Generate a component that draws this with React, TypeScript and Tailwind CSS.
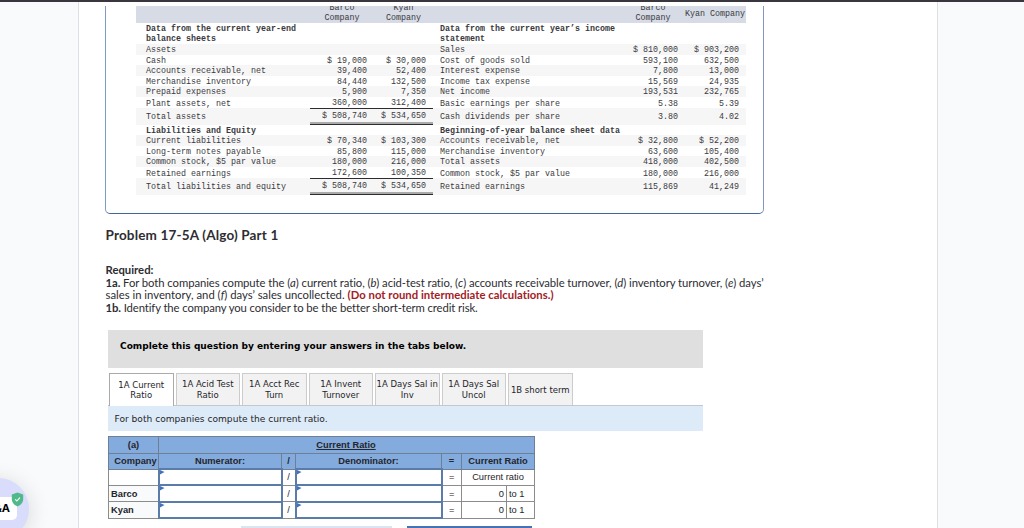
import React from 'react';

type SheetRow = {
  left: string;
  barco?: string;
  kyan?: string;
  right: string;
  barco2?: string;
  kyan2?: string;
  height: string;
  bold?: boolean;
  striped?: boolean;
  rule?: 'single' | 'double';
};

const rows: SheetRow[] = [
  { left: 'Data from the current year-end\nbalance sheets', right: 'Data from the current year’s income\nstatement', height: 'h-[21px]', bold: true },
  { left: 'Assets', right: 'Sales', barco2: '$ 810,000', kyan2: '$ 903,200', height: 'h-[11px]', striped: true },
  { left: 'Cash', barco: '$ 19,000', kyan: '$ 30,000', right: 'Cost of goods sold', barco2: '593,100', kyan2: '632,500', height: 'h-[10px]' },
  { left: 'Accounts receivable, net', barco: '39,400', kyan: '52,400', right: 'Interest expense', barco2: '7,800', kyan2: '13,000', height: 'h-[11px]', striped: true },
  { left: 'Merchandise inventory', barco: '84,440', kyan: '132,500', right: 'Income tax expense', barco2: '15,569', kyan2: '24,935', height: 'h-[10px]' },
  { left: 'Prepaid expenses', barco: '5,900', kyan: '7,350', right: 'Net income', barco2: '193,531', kyan2: '232,765', height: 'h-[11px]', striped: true },
  { left: 'Plant assets, net', barco: '360,000', kyan: '312,400', right: 'Basic earnings per share', barco2: '5.38', kyan2: '5.39', height: 'h-[11px]', rule: 'single' },
  { left: 'Total assets', barco: '$ 508,740', kyan: '$ 534,650', right: 'Cash dividends per share', barco2: '3.80', kyan2: '4.02', height: 'h-[17px]', striped: true, rule: 'double' },
  { left: 'Liabilities and Equity', right: 'Beginning-of-year balance sheet data', height: 'h-[10px]', bold: true },
  { left: 'Current liabilities', barco: '$ 70,340', kyan: '$ 103,300', right: 'Accounts receivable, net', barco2: '$ 32,800', kyan2: '$ 52,200', height: 'h-[11px]', striped: true },
  { left: 'Long-term notes payable', barco: '85,800', kyan: '115,000', right: 'Merchandise inventory', barco2: '63,600', kyan2: '105,400', height: 'h-[10px]' },
  { left: 'Common stock, $5 par value', barco: '180,000', kyan: '216,000', right: 'Total assets', barco2: '418,000', kyan2: '402,500', height: 'h-[11px]', striped: true },
  { left: 'Retained earnings', barco: '172,600', kyan: '100,350', right: 'Common stock, $5 par value', barco2: '180,000', kyan2: '216,000', height: 'h-[11px]', rule: 'single' },
  { left: 'Total liabilities and equity', barco: '$ 508,740', kyan: '$ 534,650', right: 'Retained earnings', barco2: '115,869', kyan2: '41,249', height: 'h-[17px]', striped: true, rule: 'double' }
];

const tabs = [
  '1A Current\nRatio',
  '1A Acid Test\nRatio',
  '1A Acct Rec\nTurn',
  '1A Invent\nTurnover',
  '1A Days Sal in\nInv',
  '1A Days Sal\nUncol',
  '1B short term'
];

const sheetCols = 'grid grid-cols-[174px_61px_62px_195px_56px_62px]';

const ruleClass = (rule?: 'single' | 'double') => {
  if (rule === 'single') return 'border-b border-[#2c2c30] pt-[1px]';
  if (rule === 'double') return 'border-b border-[#2c2c30] shadow-[inset_0_-2px_0_#aaaaaa]';
  return 'pt-[1px]';
};

const BalanceSheet: React.FC = () => (
  <div className="w-[610px] font-['Liberation_Mono',monospace] text-[8.33px] leading-[10px] text-[#3a3a3e] whitespace-pre">
    <div className={`${sheetCols} h-[17px] grid-rows-[17px] bg-[#d6dbe5] overflow-hidden text-center`}>
      <div />
      <div className="flex items-end justify-center pl-[3px]">{'Barco\nCompany'}</div>
      <div className="flex items-end justify-center pl-[3px]">{'Kyan\nCompany'}</div>
      <div />
      <div className="flex items-end justify-center pr-[6px]">{'Barco\nCompany'}</div>
      <div className="flex items-center justify-center pb-[2px]">Kyan Company</div>
    </div>
    {rows.map((row, i) => (
      <div
        key={i}
        className={`${sheetCols} ${row.height} ${row.striped ? 'bg-[#f6f6f6]' : ''} ${row.bold ? 'font-bold' : ''}`}
      >
        <div className="flex items-center pt-[1px] pl-[10px]">{row.left}</div>
        <div className={`flex items-center justify-end pr-[4px] ${ruleClass(row.rule)}`}>{row.barco}</div>
        <div className={`flex items-center justify-end pr-[7px] ${ruleClass(row.rule)}`}>{row.kyan}</div>
        <div className="flex items-center pt-[1px] pl-[7px]">{row.right}</div>
        <div className="flex items-center justify-end pt-[1px] pr-[6px]">{row.barco2}</div>
        <div className="flex items-center justify-end pt-[1px] pr-[7px]">{row.kyan2}</div>
      </div>
    ))}
  </div>
);

// Editable answer cell with the small blue flag in its corner
const AnswerCell: React.FC = () => (
  <td className="border-2 border-[#5b7ca8] bg-white p-0 align-top">
    <svg width="5" height="5" viewBox="0 0 5 5" className="block">
      <path d="M0 0L4.5 2L0 4.5z" fill="#4472b8" />
    </svg>
  </td>
);

const RatioTable: React.FC = () => {
  const head = 'border border-[#6f7f94] bg-[#83abde] p-0 font-bold';
  const cell = 'border border-[#8c8c8c] p-0';
  return (
    <table className="w-[427px] table-fixed border-collapse text-center font-['Liberation_Sans',Arial,sans-serif] text-[9.3px] leading-[12px] text-[#25252a]">
      <colgroup>
        <col className="w-[50px]" />
        <col className="w-[123px]" />
        <col className="w-[14px]" />
        <col className="w-[146px]" />
        <col className="w-[20px]" />
        <col className="w-[45px]" />
        <col className="w-[28px]" />
      </colgroup>
      <tbody>
        <tr className="h-[17px]">
          <td className={head}>(a)</td>
          <td colSpan={6} className={`${head} pr-[1px]`}><span className="underline">Current Ratio</span></td>
        </tr>
        <tr className="h-[16px]">
          <td className={`${head} pl-[4px]`}>Company</td>
          <td className={head}>Numerator:</td>
          <td className={head}>/</td>
          <td className={head}>Denominator:</td>
          <td className={head}>=</td>
          <td colSpan={2} className={head}>Current Ratio</td>
        </tr>
        <tr className="h-[16px]">
          <td className={cell} />
          <AnswerCell />
          <td className={cell}>/</td>
          <AnswerCell />
          <td className={cell}>=</td>
          <td colSpan={2} className={cell}>Current ratio</td>
        </tr>
        {['Barco', 'Kyan'].map((name) => (
          <tr key={name} className="h-[16.5px]">
            <td className={`${cell} bg-[#f8fafb] pl-[2px] text-left font-bold`}>{name}</td>
            <AnswerCell />
            <td className={cell}>/</td>
            <AnswerCell />
            <td className={cell}>=</td>
            <td className={`${cell} pr-[2px] text-right`}>0</td>
            <td className={`${cell} pl-[2px] text-left`}>to 1</td>
          </tr>
        ))}
      </tbody>
    </table>
  );
};

const App: React.FC = () => {
  return (
    <div className="relative flex h-[528px] w-[1024px] flex-col overflow-hidden bg-[#f8fafc]">
      <div className="h-[2px] shrink-0 bg-[#39363d]" />
      <main className="ml-[78px] h-[526px] w-[860px] border-x border-[#dcdfe4] bg-white pt-[4px] pl-[26px]">
        <div className="h-[208px] w-[659px] rounded-b-[5px] border-x border-b border-x-[#8299bf] border-b-[#43659b] pl-[30px]">
          <BalanceSheet />
        </div>

        <div className="pl-[0.5px] font-['Lato',sans-serif] text-[#2d2d32] whitespace-nowrap">
          <h2 className="mt-[12px] text-[13.5px] leading-[18px] font-bold tracking-[0.17px]">Problem 17-5A (Algo) Part 1</h2>
          <div className="mt-[20px] text-[11.3px] leading-[12.7px]">
            <p className="font-bold">Required:</p>
            <p className="tracking-[-0.073px]">
              <b>1a.</b> For both companies compute the (<i>a</i>) current ratio, (<i>b</i>) acid-test ratio, (<i>c</i>) accounts receivable turnover, (<i>d</i>) inventory turnover, (<i>e</i>) days’
            </p>
            <p>
              sales in inventory, and (<i>f</i>) days’ sales uncollected. <b className="tracking-[0.03px] text-[#a3201f]">(Do not round intermediate calculations.)</b>
            </p>
            <p className="tracking-[-0.1px]">
              <b>1b.</b> Identify the company you consider to be the better short-term credit risk.
            </p>
          </div>
        </div>

        <section className="mt-[15px] ml-[3px] w-[595px] font-['DejaVu_Sans',Verdana,sans-serif] text-[#25252a]">
          <div className="h-[38px] bg-[#dfdfdf] pt-[10px] pl-[12px] text-[9.04px] leading-[12px] font-bold text-black">
            Complete this question by entering your answers in the tabs below.
          </div>
          <div className="mt-[5px] flex h-[33px] gap-[2px] border-b border-[#c5c9cd] pl-[1px]">
            {tabs.map((tab, i) => (
              <button
                key={tab}
                className={`flex w-[64.5px] shrink-0 items-center justify-center border-x border-t pt-[1px] text-[8.5px] leading-[10.6px] whitespace-pre ${
                  i === 0 ? 'mb-[-1px] border-[#aaaaaa] bg-white' : 'border-[#cccccc] bg-[#f2f2f2]'
                }`}
              >
                {tab}
              </button>
            ))}
          </div>
          <div className="h-[25px] bg-[#ddebf8] pt-[7px] pl-[6.5px] text-[9.1px] leading-[12px]">
            For both companies compute the current ratio.
          </div>
          <div className="mt-[5px]">
            <RatioTable />
          </div>
          <div className="mt-[7px] ml-[133px] flex gap-[15px]">
            <div className="h-[10px] w-[151px] bg-[#dbe5f2]" />
            <div className="h-[10px] w-[125px] bg-[#4472b4]" />
          </div>
        </section>
      </main>

      {/* Floating Q&A helper */}
      <div className="absolute top-[478px] left-[-33px] h-[62px] w-[62px] rounded-full bg-[#dadcfb] shadow-[0_3px_22px_rgba(0,0,0,0.14)]">
        <div className="absolute top-[19px] left-[12px] flex h-[23px] w-[38px] items-center justify-end rounded-[5px] bg-white pr-[7px] font-['Inter',sans-serif] text-[11px] font-bold text-black">
          Q&amp;A
        </div>
        <svg className="absolute top-[14px] left-[44px]" width="13" height="15" viewBox="0 0 13 15">
          <path d="M6.5 0.5L12.2 2.6V7c0 3.6-2.4 6-5.7 7.4C3.2 13 .8 10.6 .8 7V2.6z" fill="#4fb98a" />
          <path d="M4.2 7.3l1.7 1.7 3-3.4" fill="none" stroke="#fff" strokeWidth="1.1" />
        </svg>
      </div>
    </div>
  );
};

export default App;
